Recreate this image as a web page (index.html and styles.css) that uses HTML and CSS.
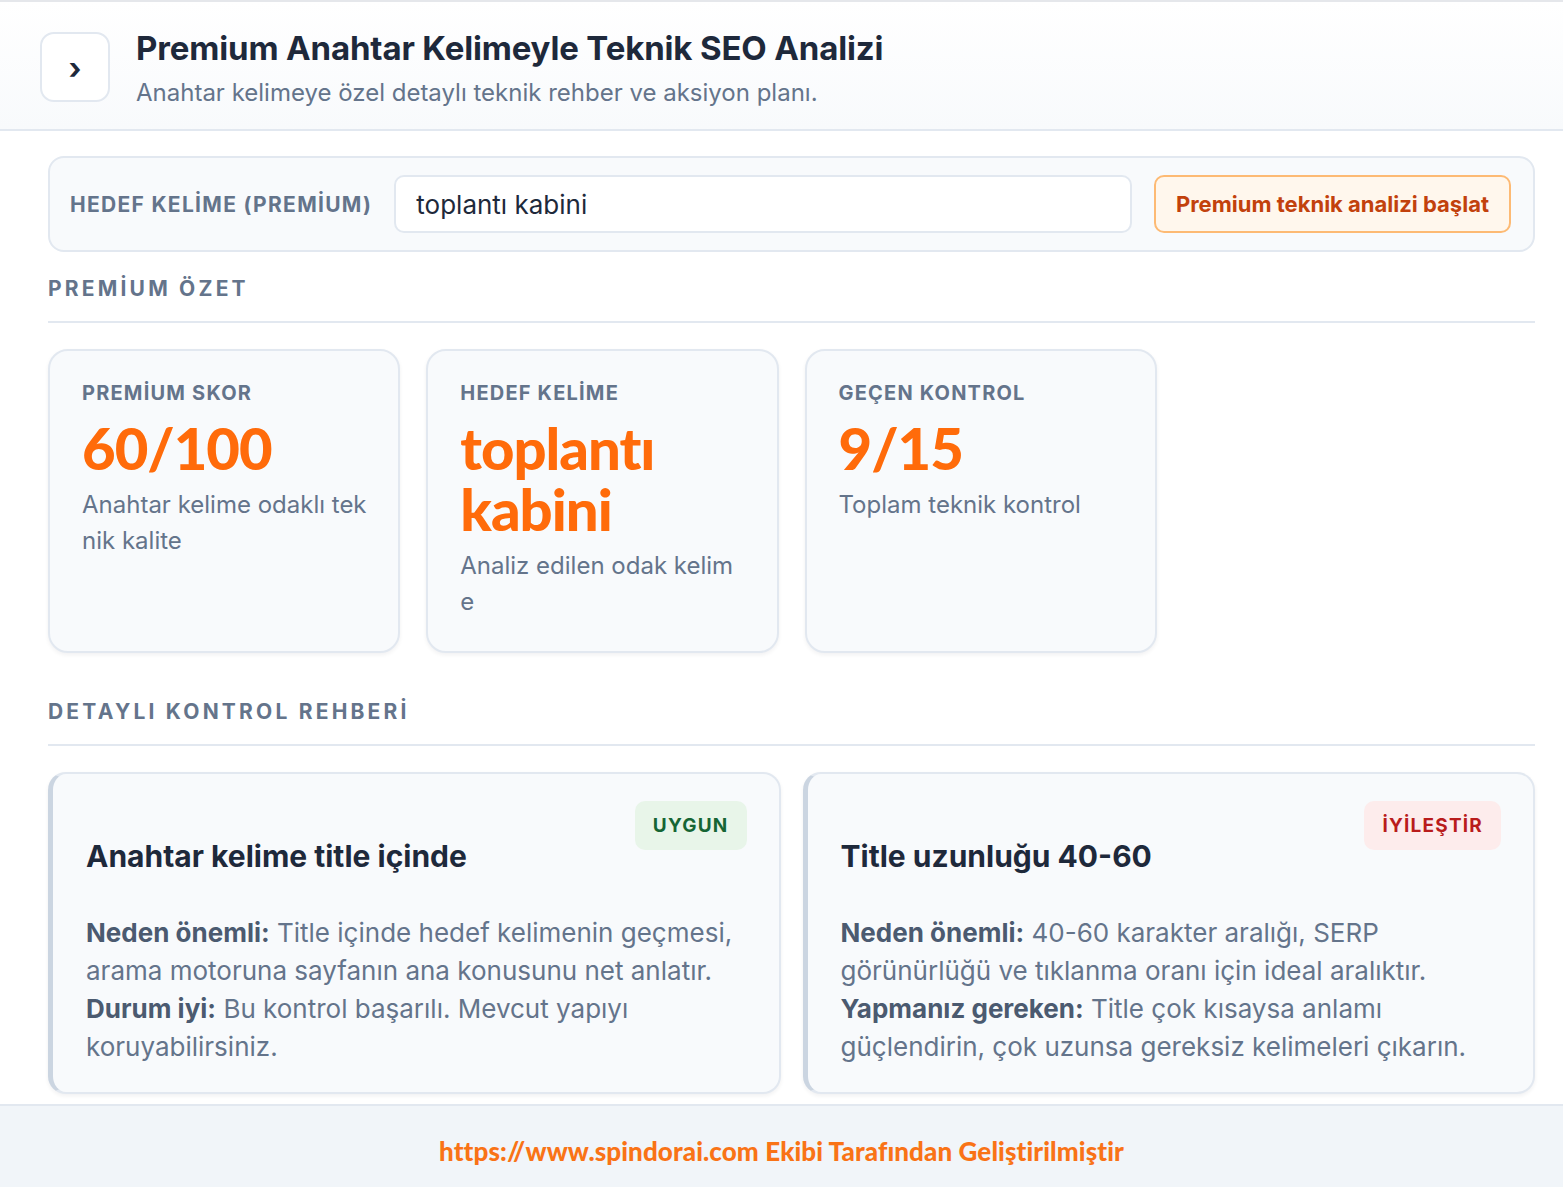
FILE: index.html
```html
<!DOCTYPE html>
<html lang="tr">
<head>
    <meta charset="UTF-8">
    <meta name="viewport" content="width=device-width, initial-scale=1.0">
    <title>Premium Anahtar Kelimeyle Teknik SEO Analizi</title>
    <link rel="stylesheet" href="styles.css">
</head>
<body>

<header class="top">
    <button class="toggle" type="button">›</button>
    <div class="top-text">
        <h1>Premium Anahtar Kelimeyle Teknik SEO Analizi</h1>
        <p>Anahtar kelimeye özel detaylı teknik rehber ve aksiyon planı.</p>
    </div>
</header>

<main class="content">
    <form class="search-panel">
        <label for="keyword">Hedef kelime (premium)</label>
        <input type="text" id="keyword" value="toplantı kabini">
        <button type="button" class="start-btn">Premium teknik analizi başlat</button>
    </form>

    <h2 class="section-title">Premium özet</h2>
    <div class="stats">
        <div class="stat">
            <div class="stat-label">Premium skor</div>
            <div class="stat-value">60/100</div>
            <div class="stat-desc">Anahtar kelime odaklı teknik kalite</div>
        </div>
        <div class="stat">
            <div class="stat-label">Hedef kelime</div>
            <div class="stat-value">toplantı kabini</div>
            <div class="stat-desc">Analiz edilen odak kelime</div>
        </div>
        <div class="stat">
            <div class="stat-label">Geçen kontrol</div>
            <div class="stat-value">9/15</div>
            <div class="stat-desc">Toplam teknik kontrol</div>
        </div>
    </div>

    <h2 class="section-title spaced">Detaylı kontrol rehberi</h2>
    <div class="checks">
        <div class="check">
            <div class="check-head">
                <h3>Anahtar kelime title içinde</h3>
                <span class="badge ok">UYGUN</span>
            </div>
            <p><strong>Neden önemli:</strong> Title içinde hedef kelimenin geçmesi, arama motoruna sayfanın ana konusunu net anlatır.
            <br><strong>Durum iyi:</strong> Bu kontrol başarılı. Mevcut yapıyı koruyabilirsiniz.</p>
        </div>
        <div class="check">
            <div class="check-head">
                <h3>Title uzunluğu 40-60</h3>
                <span class="badge fix">İYİLEŞTİR</span>
            </div>
            <p><strong>Neden önemli:</strong> 40-60 karakter aralığı, SERP görünürlüğü ve tıklanma oranı için ideal aralıktır.
            <br><strong>Yapmanız gereken:</strong> Title çok kısaysa anlamı güçlendirin, çok uzunsa gereksiz kelimeleri çıkarın.</p>
        </div>
    </div>
</main>

<footer class="bottom">
    https://www.spindorai.com Ekibi Tarafından Geliştirilmiştir
</footer>

</body>
</html>
```

FILE: styles.css
```css
/* General */
* {
    box-sizing: border-box;
}
body {
    margin: 0;
    min-height: 100vh;
    display: flex;
    flex-direction: column;
    font-family: Inter, "Noto Sans", sans-serif;
    color: #1e293b;
    background: #fff;
    border-top: 2px solid #e5e7eb;
}

/* Header */
.top {
    display: flex;
    align-items: center;
    gap: 26px;
    height: 129px;
    padding: 0 40px;
    background: linear-gradient(#ffffff, #f8fafc);
    border-bottom: 2px solid #e2e8f0;
}
.toggle {
    width: 70px;
    height: 70px;
    margin-top: 2px;
    border: 2px solid #e2e8f0;
    border-radius: 14px;
    background: #fff;
    font-family: Inter, sans-serif;
    font-size: 30px;
    font-weight: 700;
    color: #1e293b;
    line-height: 1;
    padding: 2px 0 0;
}
.top-text {
    padding-top: 3px;
}
.top-text h1 {
    margin: 0;
    font-size: 33px;
    font-weight: 700;
    letter-spacing: -0.15px;
    color: #1e293b;
}
.top-text p {
    margin: 10px 0 0;
    font-size: 24px;
    color: #64748b;
}

/* Content */
.content {
    padding: 25px 28px 10px 48px;
}
.search-panel {
    display: flex;
    align-items: center;
    gap: 22px;
    padding: 17px 22px 17px 20px;
    background: #f8fafc;
    border: 2px solid #e2e8f0;
    border-radius: 16px;
}
.search-panel label {
    font-size: 21px;
    font-weight: 700;
    text-transform: uppercase;
    letter-spacing: 1.3px;
    color: #64748b;
    white-space: nowrap;
}
.search-panel input {
    flex: 1;
    height: 58px;
    padding: 0 20px;
    border: 2px solid #e2e8f0;
    border-radius: 10px;
    background: #fff;
    font-family: Inter, sans-serif;
    font-size: 26px;
    color: #1e293b;
}
.start-btn {
    height: 58px;
    padding: 0 20px;
    background: #fff7ed;
    border: 2px solid #fdba74;
    border-radius: 10px;
    font-family: Inter, sans-serif;
    font-size: 22px;
    font-weight: 700;
    color: #c2410c;
}

.section-title {
    margin: 24px 0 26px;
    padding-bottom: 20px;
    border-bottom: 2px solid #e2e8f0;
    font-size: 21px;
    font-weight: 700;
    letter-spacing: 3.2px;
    text-transform: uppercase;
    color: #64748b;
}
.section-title.spaced {
    margin-top: 46px;
}

/* Summary cards */
.stats {
    display: grid;
    grid-template-columns: repeat(4, 1fr);
    gap: 26px;
}
.stat {
    height: 304px;
    padding: 30px 30.5px 30px 32px;
    background: #f8fafc;
    border: 2px solid #e2e8f0;
    border-radius: 20px;
    box-shadow: 0 2px 4px rgba(15, 23, 42, 0.06);
}
.stat-label {
    font-size: 20px;
    font-weight: 700;
    letter-spacing: 1.2px;
    text-transform: uppercase;
    color: #64748b;
}
.stat-value {
    margin-top: 12px;
    font-family: Lato, sans-serif;
    font-size: 58px;
    font-weight: 900;
    line-height: 61px;
    color: #ff6b0a;
    letter-spacing: -1px;
}
.stat-desc {
    margin-top: 9px;
    font-size: 24px;
    line-height: 36px;
    color: #64748b;
    word-break: break-all;
}

/* Check cards */
.checks {
    display: grid;
    grid-template-columns: 1fr 1fr;
    gap: 22px;
}
.check {
    padding: 27px 32px 26px 33px;
    background: #f8fafc;
    border: 2px solid #e2e8f0;
    border-left: 5px solid #cbd5e1;
    border-radius: 18px;
    box-shadow: 0 2px 4px rgba(15, 23, 42, 0.06);
}
.check-head {
    display: flex;
    justify-content: space-between;
    align-items: flex-start;
}
.check-head h3 {
    margin: 37px 0 0;
    font-size: 30px;
    font-weight: 700;
    color: #1e293b;
}
.badge {
    padding: 13px 18px;
    border-radius: 10px;
    font-size: 19px;
    font-weight: 700;
    letter-spacing: 1.2px;
}
.badge.ok {
    background: #e8f5e9;
    color: #166534;
}
.badge.fix {
    background: #fdecec;
    color: #b91c1c;
}
.check p {
    margin: 40px 0 0;
    font-size: 26px;
    line-height: 38px;
    color: #64748b;
}
.check strong {
    color: #4b5a70;
}

/* Footer */
.bottom {
    margin-top: auto;
    padding: 30px 0 21px;
    background: #f1f5f9;
    border-top: 2px solid #e2e8f0;
    text-align: center;
    font-family: Lato, sans-serif;
    font-size: 26px;
    line-height: 30px;
    font-weight: 900;
    letter-spacing: 0.1px;
    color: #f97316;
}
```
